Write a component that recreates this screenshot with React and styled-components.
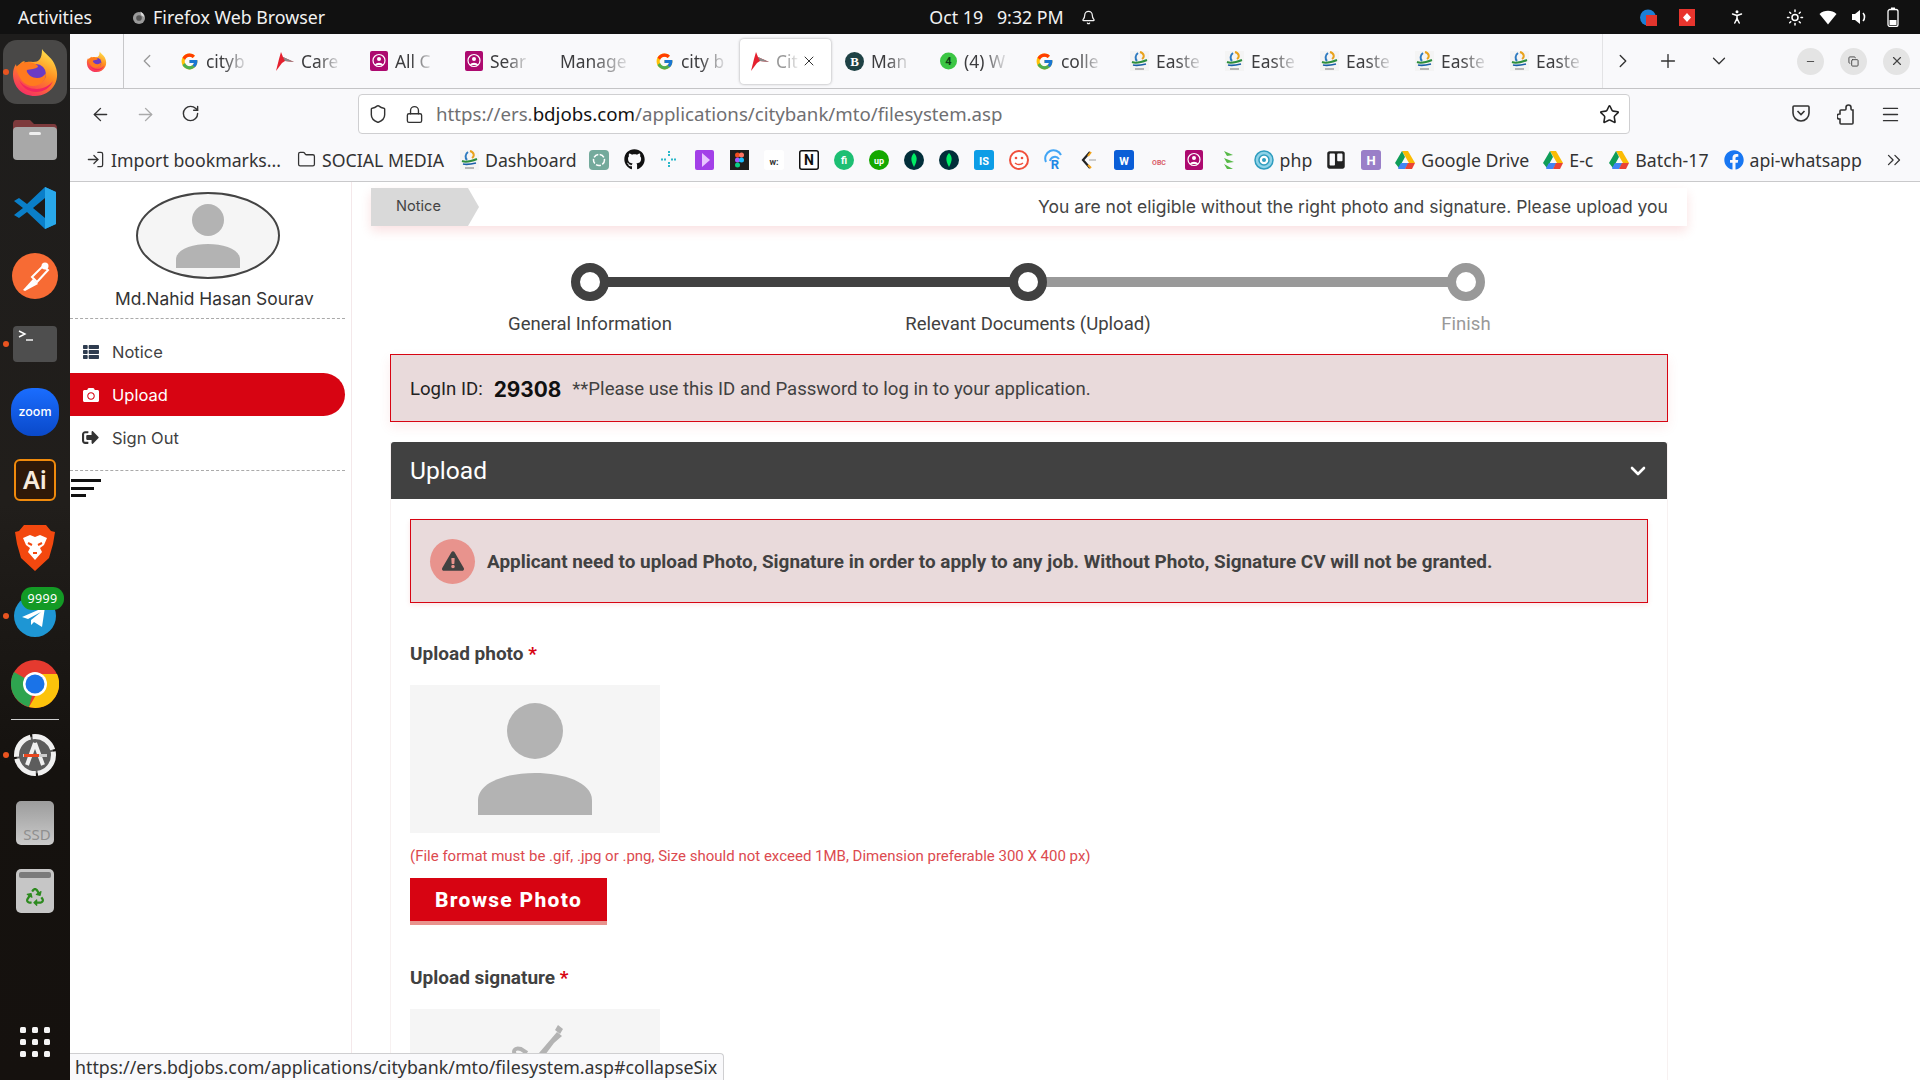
import React from "react";
import styled, { createGlobalStyle } from "styled-components";
import { FcGoogle } from "react-icons/fc";
import { FaGithub, FaTrello, FaFacebook, FaThList, FaCamera, FaSignOutAlt, FaExclamationTriangle, FaRecycle } from "react-icons/fa";
import {
  ArrowLeft, ArrowRight, RotateCw, Shield, Lock, Star, Menu, ChevronLeft, ChevronRight, ChevronDown,
  Plus, X, Minus, Copy, Folder, LogIn, Bell, PersonStanding, Sun, ChevronsRight,
} from "lucide-react";

const ui = `"Noto Sans", "Open Sans", sans-serif`;
const body = `Roboto, "Liberation Sans", sans-serif`;
const dark = "#414141";
const red = "#d70412";

const Global = createGlobalStyle`
  html, body { margin: 0; padding: 0; background: #fff; overflow: hidden; }
  * { box-sizing: border-box; }
  #root { width: 1920px; height: 1080px; }
`;

const Screen = styled.div`
  width: 1920px; height: 1080px; display: flex; flex-direction: column; overflow: hidden; position: relative;
  font-family: ${body};
`;
const TopBar = styled.div`
  height: 34px; background: #111; color: #f2f2f2; display: grid; grid-template-columns: 1fr auto 1fr;
  align-items: center; padding: 0 18px; font-family: ${ui}; font-size: 17.8px; flex-shrink: 0;
`;
const TopLeft = styled.div`display: flex; align-items: center;`;
const AppName = styled.div`display: flex; align-items: center; gap: 7px; margin-left: 40px;`;
const Clock = styled.div`display: flex; align-items: center; gap: 17px; margin-left: 105px;`;
const TopRight = styled.div`display: flex; justify-content: flex-end; align-items: center;`;
const TrayIcon = styled.span`
  display: flex; width: 18px; justify-content: center; margin-left: ${(p) => p.$gap || 0}px; color: #fff;
`;

const Body = styled.div`flex: 1; display: flex; min-height: 0;`;
const Dock = styled.div`
  width: 70px; flex-shrink: 0; display: flex; flex-direction: column; align-items: center; padding-top: 4px;
  background: linear-gradient(180deg, #1e1d1c 0%, #211e1b 45%, #15120f 70%, #15110e 100%);
`;
const DockItem = styled.div`
  position: relative; width: 64px; height: 68px; display: flex; align-items: center; justify-content: center;
  flex-shrink: 0;
`;
const DockActive = styled(DockItem)`
  background: #494847; border-radius: 14px; height: 64px; margin: 2px 0;
`;
const RunDot = styled.i`
  position: absolute; left: 0; top: 50%; width: 6px; height: 6px; margin-top: -3px; border-radius: 50%; background: #e95420;
`;
const Badge = styled.span`
  position: absolute; right: 3px; top: 5px; height: 23px; width: 43px; border-radius: 11px; background: #139a25; color: #fff;
  font-family: ${ui}; font-size: 12.5px; display: flex; align-items: center; justify-content: center; letter-spacing: .4px;
`;
const DockSep = styled.div`width: 48px; height: 1px; background: #cfcfcf; margin: 1px 0; flex-shrink: 0;`;
const AppGrid = styled.div`
  margin-top: auto; margin-bottom: 23px; display: grid; grid-template-columns: repeat(3, 6px); gap: 6px;
`;
const GridDot = styled.i`width: 6px; height: 6px; background: #f5f5f5; border-radius: 1.5px;`;

const Browser = styled.div`flex: 1; min-width: 0; display: flex; flex-direction: column; background: #fff;`;
const TabBar = styled.div`
  height: 55px; background: #f9f9fb; border-bottom: 1px solid #c4c4c6; display: flex; align-items: center; flex-shrink: 0;
`;
const TabLogo = styled.div`
  width: 54px; height: 54px; display: flex; align-items: center; justify-content: center; border-right: 1px solid #c8c8ca; flex-shrink: 0;
`;
const ScrollBtn = styled.div`width: 46px; display: flex; justify-content: center; color: #999; flex-shrink: 0;`;
const Tabs = styled.div`display: flex; gap: 4px; width: 1433px; height: 54px; align-items: center; border-right: 1px solid #e3e3e5; flex-shrink: 0;`;
const Tab = styled.div`
  width: 91px; height: 45px; padding: 0 10px; display: flex; align-items: center; gap: 7px; flex-shrink: 0; position: relative;
  font-family: ${ui}; font-size: 17.4px; color: #3d3d3f; border-radius: 4px;
  ${(p) => p.$active && "background:#fff; box-shadow: 0 0 3px rgba(0,0,0,.35);"}
`;
const TabLabel = styled.span`
  white-space: nowrap;
  -webkit-mask-image: linear-gradient(90deg, #000 45%, rgba(0,0,0,.15) 100%);
  mask-image: linear-gradient(90deg, #000 45%, rgba(0,0,0,.15) 100%);
  ${(p) => p.$active && "color:#999;"}
`;
const TabClose = styled.span`position: absolute; right: 14px; top: 14px; display: flex; color: #333;`;
const TabTools = styled.div`display: flex; align-items: center; color: #333;`;
const ToolBtn = styled.div`width: ${(p) => p.$w}px; display: flex; justify-content: center;`;
const WinBtn = styled.div`
  width: 27px; height: 27px; border-radius: 50%; background: #e4e4e4; display: flex; align-items: center; justify-content: center;
  margin-left: ${(p) => p.$gap}px; color: #444;
`;

const NavBar = styled.div`
  height: 50px; background: #f9f9fb; display: flex; align-items: center; flex-shrink: 0;
`;
const NavBtn = styled.div`
  width: 45px; display: flex; justify-content: center; color: ${(p) => p.$c || "#333"}; flex-shrink: 0;
`;
const NavGroup = styled.div`display: flex; margin-left: 8px;`;
const UrlBox = styled.div`
  width: 1272px; height: 40px; margin-left: 145px; background: #fff; border: 1px solid #cfcfd1; border-radius: 4px; display: flex; align-items: center;
  font-family: ${ui}; font-size: 18.7px; color: #6f6f72; padding: 0 9px; flex-shrink: 0;
`;
const UrlIcons = styled.div`display: flex; gap: 17px; align-items: center; color: #333; margin-right: 12px;`;
const UrlText = styled.div`flex: 1; white-space: nowrap; padding-bottom: 2px;`;
const Host = styled.span`color: #111;`;
const NavRight = styled.div`display: flex; margin-left: 148px;`;

const BookBar = styled.div`
  height: 43px; background: #f9f9fb; border-bottom: 1px solid #c9c9cb; display: flex; align-items: center; padding-left: 16px; padding-bottom: 1px; flex-shrink: 0;
  font-family: ${ui}; font-size: 17.7px; color: #333;
`;
const Mark = styled.div`
  display: flex; align-items: center; gap: 6px; white-space: nowrap; margin-left: ${(p) => p.$ml || 0}px; margin-right: ${(p) => p.$mr ?? 16}px; flex-shrink: 0;
`;
const IconMark = styled.div`width: 35px; display: flex; justify-content: center; flex-shrink: 0;`;
const More = styled.div`margin-left: 21px; display: flex; color: #333;`;

const Page = styled.div`flex: 1; min-height: 0; display: flex; overflow: hidden; background: #fff;`;
const Sidebar = styled.div`
  width: 282px; flex-shrink: 0; border-right: 1px solid #f4e8ea; padding: 10px 6px 0 0; display: flex; flex-direction: column;
`;
const AvatarWrap = styled.div`
  width: 144px; height: 87px; margin-left: 66px; border: 2px solid #444; border-radius: 50%; background: #f5f5f5; overflow: hidden;
  display: flex; align-items: flex-end; justify-content: center; padding-bottom: 9px;
`;
const UserName = styled.div`
  font-family: Inter, sans-serif; font-size: 17.4px; color: #333; margin: 9px 0 9px 45px; white-space: nowrap;
`;
const Dotted = styled.div`border-top: 1px dashed #aaa; height: 0;`;
const NavList = styled.div`display: flex; flex-direction: column; padding: 11px 0 11px;`;
const NavItem = styled.div`
  height: 43px; display: flex; align-items: center; gap: 13px; padding-left: 12px; font-family: Inter, sans-serif; font-size: 16.5px;
  color: ${(p) => (p.$active ? "#fff" : dark)}; background: ${(p) => (p.$active ? red : "transparent")};
  border-radius: ${(p) => (p.$active ? "0 22px 22px 0" : "0")};
`;
const NavIcon = styled.span`display: flex; width: 17px; justify-content: center; color: ${(p) => p.$c};`;
const Burger = styled.div`display: flex; flex-direction: column; gap: 4.5px; padding: 8px 0 0 1px;`;
const BurgerLine = styled.i`height: 3px; width: ${(p) => p.$w}px; background: #111;`;

const Main = styled.div`width: 1316px; margin-left: 19px; padding-top: 6px; flex-shrink: 0;`;
const NoticeBar = styled.div`
  height: 38px; display: flex; align-items: stretch; background: #fff; box-shadow: 0 5px 12px rgba(215, 4, 18, .12);
`;
const NoticeTag = styled.div`
  width: 97px; background: #d9d9d9; position: relative; display: flex; align-items: center; padding: 0 0 2px 25px;
  font-family: Inter, sans-serif; font-size: 14.6px; color: #444; flex-shrink: 0;
  &::after {
    content: ""; position: absolute; left: 100%; top: 0; border-left: 11px solid #d9d9d9; border-top: 19px solid transparent; border-bottom: 19px solid transparent;
  }
`;
const Marquee = styled.div`
  flex: 1; white-space: nowrap; padding: 0 0 2px 570px; display: flex; align-items: center;
  font-family: Inter, sans-serif; font-size: 17.5px; color: #444;
`;

const Steps = styled.div`display: flex; padding: 37px 0 1px; width: 1240px;`;
const Step = styled.div`
  width: 438px; display: flex; flex-direction: column; align-items: center; flex-shrink: 0; position: relative;
`;
const StepDot = styled.div`
  width: 38px; height: 38px; border-radius: 50%; background: #fff; border: 9px solid ${(p) => p.$c}; position: relative; z-index: 1;
`;
const StepLine = styled.div`
  position: absolute; left: 50%; top: 14px; width: 438px; height: 10px; background: ${(p) => p.$c};
`;
const StepLabel = styled.div`
  margin-top: 12px; font-size: 18.55px; color: ${(p) => p.$c}; white-space: nowrap;
`;

const Content = styled.div`margin: 18px 19px 0 19px;`;
const LoginBox = styled.div`
  height: 68px; background: #e9dadb; border: 1px solid ${red}; display: flex; align-items: center; padding: 2px 0 0 19px; font-size: 18.6px; color: #222;
  box-shadow: 0 5px 12px rgba(215, 4, 18, .08); white-space: pre;
`;
const LoginNum = styled.b`font-family: Inter, sans-serif; font-size: 20.8px; color: #111; margin: 0 11px; font-weight: 700;`;
const LoginNote = styled.span`color: ${dark};`;
const Panel = styled.div`margin-top: 20px; border-left: 1px solid #f7f1f1; border-right: 1px solid #f7f1f1;`;
const PanelHead = styled.div`
  height: 57px; background: ${dark}; color: #fff; display: flex; align-items: center; justify-content: space-between;
  padding: 0 17px 0 19px; font-size: 24.6px; border-radius: 3px 3px 0 0;
`;
const PanelBody = styled.div`padding: 20px 19px 0;`;
const AlertBox = styled.div`
  height: 84px; background: #e9dadb; border: 1px solid ${red}; display: flex; align-items: center; padding-left: 19px; gap: 12px;
  font-size: 18.9px; font-weight: 700; color: ${dark}; box-shadow: 0 2px 5px rgba(215,4,18,.1); white-space: nowrap;
`;
const AlertIcon = styled.div`
  width: 45px; height: 45px; border-radius: 50%; background: #e8938d; display: flex; align-items: center; justify-content: center; color: ${dark};
`;
const FieldLabel = styled.div`
  font-size: 19px; font-weight: 700; color: ${dark}; margin-top: ${(p) => p.$mt}px; height: 21px; line-height: 21px;
`;
const Req = styled.span`color: ${red};`;
const PhotoBox = styled.div`
  width: 250px; height: 148px; background: #f5f5f5; margin-top: 21px; display: flex; align-items: flex-start; justify-content: center;
  padding-top: ${(p) => p.$pt}px;
`;
const HelpText = styled.div`font-size: 15px; color: #dc4a4f; margin-top: 15px; height: 17px; line-height: 17px; white-space: nowrap;`;
const BrowseBtn = styled.button`
  display: block; width: 197px; height: 47px; margin-top: 13px; border: 0; border-bottom: 4px solid #e8938d; background: ${red}; color: #fff;
  font-family: ${body}; font-weight: 800; font-size: 21px; letter-spacing: 1.3px; padding: 0;
`;

const StatusLink = styled.div`
  position: absolute; left: 70px; bottom: 0; width: 654px; height: 27px; background: #f9f9fb; border: 1px solid #cfcfd1; border-left: 0; border-bottom: 0;
  border-radius: 0 4px 0 0; font-family: ${ui}; font-size: 17.8px; color: #333; padding-left: 5px; display: flex; align-items: center; white-space: nowrap;
`;

const FirefoxLogo = ({ s = 24 }) => (
  <svg width={s} height={s} viewBox="0 0 48 48">
    <defs>
      <linearGradient id="ffa" x1="0.7" y1="0" x2="0.2" y2="1"><stop offset="0" stopColor="#ffe04a" /><stop offset=".45" stopColor="#ff8a1f" /><stop offset="1" stopColor="#f6256b" /></linearGradient>
    </defs>
    <path d="M31 1c2 4 9 8 12 14 4 8 4 15 1 21-4 8-12 12-20 12C11 48 2 39 2 26c0-4 1-7 3-10 0 2 1 3 2 4 1-4 4-7 7-7-1 1-1 2-1 3 3-3 6-2 9-2 6 0 9-3 9-13z" fill="url(#ffa)" />
    <circle cx="25" cy="26" r="10" fill="#6a3bc4" />
    <path d="M5 19c5-5 11-6 17-4 3 1 5 2 5 4-3 2-7 2-12 3 2 5 6 8 11 8 4 0 7-2 9-5 0 8-6 13-13 13C13 38 7 30 5 19z" fill="#ff7a1f" />
    <path d="M8 32c3 7 9 12 17 12s14-4 17-11c-3 4-9 8-16 8s-14-3-18-9z" fill="#f2255f" />
  </svg>
);

const FolderApp = () => (
  <svg width="46" height="42" viewBox="0 0 46 42">
    <path d="M1 5c0-2 1-4 3-4h14l4 4h20c2 0 3 2 3 4v12H1z" fill="#7d3a3c" />
    <rect x="1" y="8" width="44" height="33" rx="4" fill="#a8a8a8" />
    <rect x="17" y="13" width="12" height="3" rx="1.5" fill="#efefef" />
  </svg>
);
const VsCode = () => (
  <svg width="44" height="44" viewBox="0 0 44 44">
    <path d="M32 1l11 5v32l-11 5-18-17-8 6-5-3 9-7-9-7 5-3 8 6z" fill="#0a7fc9" />
    <path d="M32 1l11 5v32l-11 5z" fill="#29a8ea" />
    <path d="M32 12L20 22l12 10z" fill="#1c1b1a" />
  </svg>
);
const Postman = () => (
  <svg width="46" height="46" viewBox="0 0 46 46">
    <circle cx="23" cy="23" r="23" fill="#f76b34" />
    <path d="M11 37l10-11 5 5-13 7z" fill="#fff" />
    <path d="M20 24l11-11 5 4-11 12z" fill="none" stroke="#fff" strokeWidth="2" />
    <circle cx="33" cy="13" r="3.5" fill="#fff" />
  </svg>
);
const TerminalApp = () => (
  <svg width="44" height="36" viewBox="0 0 44 36">
    <rect width="44" height="36" rx="4" fill="#4e4e4e" />
    <path d="M6 5l6 3-6 3" fill="none" stroke="#fff" strokeWidth="1.4" />
    <path d="M13 14h7" stroke="#fff" strokeWidth="1.4" />
  </svg>
);
const ZoomApp = () => (
  <svg width="48" height="48" viewBox="0 0 48 48">
    <defs><linearGradient id="zm" x1="0" y1="0" x2="0" y2="1"><stop offset="0" stopColor="#1a6dff" /><stop offset="1" stopColor="#0a49c9" /></linearGradient></defs>
    <rect width="48" height="48" rx="21" fill="url(#zm)" />
    <text x="24" y="28" textAnchor="middle" fontFamily="Inter, sans-serif" fontSize="12.5" fontWeight="500" fill="#fff">zoom</text>
  </svg>
);
const AiApp = () => (
  <svg width="42" height="42" viewBox="0 0 42 42">
    <rect x="1" y="1" width="40" height="40" rx="5" fill="#2e1808" stroke="#f08a0c" strokeWidth="2" />
    <text x="21" y="30" textAnchor="middle" fontFamily="Noto Sans, sans-serif" fontSize="25" fontWeight="600" fill="#f7ebdc">Ai</text>
  </svg>
);
const Brave = () => (
  <svg width="42" height="48" viewBox="0 0 42 48">
    <path d="M10 1h22l5 6 4 1-2 12-4 14-14 13-14-13-4-14L1 8l4-1z" fill="#f3480f" />
    <path d="M9 14l7-3 5 2 5-2 7 3-3 7-4 3 2 4-7 8-7-8 2-4-4-3z" fill="#fff" />
    <path d="M14 19l4 2M28 19l-4 2M19 29h4" stroke="#f3480f" strokeWidth="2" />
  </svg>
);
const Telegram = () => (
  <svg width="42" height="42" viewBox="0 0 42 42">
    <circle cx="21" cy="21" r="21" fill="#1e96d4" />
    <path d="M8 22l23-10-3 20-8-5-3 3v-5l10-8-13 7z" fill="#fff" />
  </svg>
);
const Chrome = () => (
  <svg width="48" height="48" viewBox="0 0 48 48">
    <circle cx="24" cy="24" r="24" fill="#e53a2f" />
    <path d="M24 24L3 12A24 24 0 0 0 18 47z" fill="#2ea44f" />
    <path d="M24 14h22a24 24 0 0 1-22 34l-6-1 11-19z" fill="#fcc30b" />
    <circle cx="24" cy="24" r="12" fill="#fff" />
    <circle cx="24" cy="24" r="9.5" fill="#1a73e8" />
  </svg>
);
const Updater = () => (
  <svg width="42" height="42" viewBox="0 0 42 42">
    <circle cx="21" cy="21" r="18.500" fill="#5d5d5d" stroke="#f0f0f0" strokeWidth="5" strokeDasharray="26 2" />
    <path d="M21 9L13 31M21 9l8 22" stroke="#f0f0f0" strokeWidth="4" fill="none" />
    <rect x="9" y="20" width="24" height="3" fill="#ccc" />
    <rect x="10" y="20" width="15" height="3" fill="#e8461e" />
  </svg>
);
const SsdDrive = () => (
  <svg width="38" height="44" viewBox="0 0 38 44">
    <defs><linearGradient id="ssd" x1="0" y1="0" x2="0" y2="1"><stop offset="0" stopColor="#9c9c9c" /><stop offset="1" stopColor="#cbcbcb" /></linearGradient></defs>
    <rect width="38" height="44" rx="5" fill="url(#ssd)" />
    <text x="21" y="39" textAnchor="middle" fontFamily="Noto Sans, sans-serif" fontSize="15" fill="#8f8f8f">SSD</text>
  </svg>
);
const TrashBox = styled.div`
  width: 38px; height: 44px; border-radius: 5px; background: #c6c6c6; position: relative; display: flex; align-items: flex-end; justify-content: center;
  padding-bottom: 7px; color: #2d8a1f;
  &::before { content: ""; position: absolute; left: 3px; right: 3px; top: 3px; height: 6px; border-radius: 2px; background: #7b7b7b; }
`;

const BdBird = () => (
  <svg width="19" height="20" viewBox="0 0 19 20">
    <path d="M1 20L4 8 6 1l2 5 11 5-9-1-3 2z" fill="#e5202e" />
    <path d="M8 6l11 5-9-1z" fill="#8a8a8a" />
  </svg>
);
const RoundSquare = ({ c }) => (
  <svg width="18" height="20" viewBox="0 0 18 20">
    <rect width="18" height="20" rx="2" fill={c} />
    <circle cx="9" cy="9.5" r="6" fill="none" stroke="#fff" strokeWidth="1.2" />
    <circle cx="9" cy="8" r="2" fill="#fff" />
    <path d="M5 14c1-3 7-3 8 0z" fill="#fff" />
  </svg>
);
const BCircle = () => (
  <svg width="19" height="19" viewBox="0 0 19 19">
    <circle cx="9.5" cy="9.5" r="9.5" fill="#1f4245" />
    <text x="9.5" y="14" textAnchor="middle" fontSize="13" fontWeight="700" fontFamily="Liberation Serif, serif" fill="#fff">B</text>
  </svg>
);
const GreenFour = () => (
  <svg width="17" height="18" viewBox="0 0 17 18">
    <circle cx="8.5" cy="9" r="8.5" fill="#3cc644" />
    <text x="8.5" y="13" textAnchor="middle" fontSize="11" fontWeight="700" fontFamily="Roboto, sans-serif" fill="#0c3d12">4</text>
  </svg>
);
const EastLogo = () => (
  <svg width="19" height="20" viewBox="0 0 19 20">
    <rect width="19" height="20" fill="#f4f4f4" />
    <path d="M10 1c4 1 5 5 2 7" fill="none" stroke="#e9a21b" strokeWidth="2" />
    <path d="M8 2C5 4 5 8 7 10" fill="none" stroke="#2f7bc0" strokeWidth="2" />
    <path d="M2 11c5 2 10 0 15-2" fill="none" stroke="#2d8e3d" strokeWidth="2" />
    <path d="M3 14c4 1 9 0 13-1" fill="none" stroke="#1a5fa8" strokeWidth="1.6" />
    <path d="M5 18h9" stroke="#9a9a9a" strokeWidth="1.4" />
  </svg>
);
const Drive = () => (
  <svg width="20" height="18" viewBox="0 0 20 18">
    <path d="M7 0h6l7 12h-6z" fill="#fbbc04" />
    <path d="M7 0l3 6-6 11-4-5z" fill="#0f9d58" />
    <path d="M6 12h8l-4 6H3.500L3 17z" fill="#4285f4" />
    <path d="M13 12h7l-3 6h-7z" fill="#ea4335" />
  </svg>
);
const Square = ({ c, children, color = "#fff", fs = 12, line }) => (
  <svg width="20" height="20" viewBox="0 0 20 20">
    <rect x=".75" y=".75" width="18.5" height="18.5" rx="2" fill={c} stroke={line || c} strokeWidth="1.5" />
    <text x="10" y="14.5" textAnchor="middle" fontFamily="Roboto, sans-serif" fontWeight="700" fontSize={fs} fill={color}>{children}</text>
  </svg>
);
const FigmaTile = () => (
  <svg width="19" height="20" viewBox="0 0 19 20">
    <rect width="19" height="20" fill="#1e1e1e" />
    <circle cx="7.500" cy="5" r="2.500" fill="#f24e1e" /><circle cx="11.500" cy="5" r="2.500" fill="#ff7262" />
    <circle cx="7.500" cy="10" r="2.500" fill="#a259ff" /><circle cx="11.500" cy="10" r="2.500" fill="#1abcfe" />
    <circle cx="7.500" cy="15" r="2.500" fill="#0acf83" />
  </svg>
);
const Disc = ({ c, children, color = "#fff", fs = 10 }) => (
  <svg width="20" height="20" viewBox="0 0 20 20">
    <circle cx="10" cy="10" r="10" fill={c} />
    <text x="10" y="13.500" textAnchor="middle" fontFamily="Roboto, sans-serif" fontWeight="700" fontSize={fs} fill={color}>{children}</text>
  </svg>
);
const Leaf = ({ c = "#00ed64" }) => (
  <svg width="20" height="20" viewBox="0 0 20 20">
    <circle cx="10" cy="10" r="10" fill="#022f3a" />
    <path d="M10 3c3 3 4 7 0 14-4-7-3-11 0-14z" fill={c} />
  </svg>
);
const Sparks = () => (
  <svg width="20" height="19" viewBox="0 0 20 19">
    <path d="M10 1v6M10 12v6M2 9.5h6M12 9.5h6" stroke="#2bb8c9" strokeWidth="2" strokeDasharray="2 1" />
  </svg>
);
const Play = () => (
  <svg width="19" height="20" viewBox="0 0 19 20">
    <rect width="19" height="20" rx="2" fill="#a340e8" />
    <path d="M7 3l8 7-8 7z" fill="#e9c6ff" />
  </svg>
);
const FaceIcon = () => (
  <svg width="20" height="20" viewBox="0 0 20 20">
    <circle cx="10" cy="10" r="9" fill="#fff" stroke="#f0503c" strokeWidth="2" />
    <circle cx="7" cy="8" r="1.3" fill="#f0503c" /><circle cx="13" cy="8" r="1.3" fill="#f0503c" />
    <path d="M6 13c2 2 6 2 8 0" stroke="#f0503c" fill="none" strokeWidth="1.4" />
  </svg>
);
const RIcon = () => (
  <svg width="20" height="21" viewBox="0 0 20 21">
    <path d="M2 13a8 8 0 0 1 15-7" stroke="#42a5f5" strokeWidth="2" fill="none" />
    <path d="M6 12a5 5 0 0 1 9-2" stroke="#42a5f5" strokeWidth="2" fill="none" />
    <text x="11" y="20" textAnchor="middle" fontFamily="Roboto, sans-serif" fontWeight="700" fontSize="13" fill="#1e88e5">R</text>
  </svg>
);
const Cee = () => (
  <svg width="18" height="20" viewBox="0 0 18 20">
    <path d="M10 2L3 10l7 8" stroke="#222" strokeWidth="2.2" fill="none" />
    <path d="M9 10h7" stroke="#ccc" strokeWidth="2" /><path d="M11 2L8 6" stroke="#f4a51c" strokeWidth="2" /><path d="M8 15l3 3" stroke="#f4a51c" strokeWidth="2" />
  </svg>
);
const Arrows = () => (
  <svg width="16" height="20" viewBox="0 0 16 20">
    <path d="M3 1l9 4-6 1zM3 8l10 4-7 1zM3 14l9 5-6 0z" fill="#57b947" />
  </svg>
);
const Ring = () => (
  <svg width="20" height="20" viewBox="0 0 20 20">
    <circle cx="10" cy="10" r="9" fill="#8fd3e8" stroke="#2f9dbf" strokeWidth="1.5" />
    <circle cx="10" cy="10" r="5" fill="#fff" stroke="#2f9dbf" strokeWidth="1.5" />
    <circle cx="10" cy="10" r="2" fill="#2f9dbf" />
  </svg>
);
const GptIcon = () => (
  <svg width="20" height="20" viewBox="0 0 20 20">
    <rect width="20" height="20" rx="4" fill="#74aa9c" />
    <circle cx="10" cy="10" r="5.5" fill="none" stroke="#fff" strokeWidth="1.5" strokeDasharray="5 1.5" />
  </svg>
);
const Pocket = () => (
  <svg width="18" height="18" viewBox="0 0 18 18">
    <path d="M2 2h14c.6 0 1 .4 1 1v6a8 8 0 0 1-16 0V3c0-.6.4-1 1-1z" fill="none" stroke="#333" strokeWidth="1.6" />
    <path d="M5.5 7L9 10.5 12.5 7" fill="none" stroke="#333" strokeWidth="1.6" />
  </svg>
);
const ExtensionIcon = () => (
  <svg width="18" height="21" viewBox="0 0 18 21">
    <path d="M9 5V3.500a2.500 2.500 0 0 1 5 0V5c0 .5.300 1 1 1h1v13a1 1 0 0 1-1 1H4a1 1 0 0 1-1-1v-4H2.500a2.500 2.500 0 0 1 0-5H3V7a1 1 0 0 1 1-1h4c.6 0 1-.5 1-1z" fill="none" stroke="#333" strokeWidth="1.600" />
  </svg>
);
const Person = ({ w, h, r, bw, bh }) => (
  <svg width={w} height={h} viewBox={`0 0 ${w} ${h}`}>
    <circle cx={w / 2} cy={r} r={r} fill="#b3b3b3" />
    <path d={`M${(w - bw) / 2} ${h}v-${bh * 0.35}c0-${bh * 0.87} ${bw}-${bh * 0.87} ${bw} 0v${bh * 0.35}z`} fill="#b3b3b3" />
  </svg>
);
const Pen = () => (
  <svg width="60" height="36" viewBox="0 0 60 36">
    <path d="M34 30L52 9l5 4-8 7-9 12z" fill="#b3b3b3" />
    <path d="M53 2l5 4-3 5-5-4z" fill="#b3b3b3" />
    <path d="M12 34c-6-6-2-10 4-8l6 4" fill="none" stroke="#b3b3b3" strokeWidth="4" />
  </svg>
);
const FirefoxGray = () => (
  <svg width="14" height="15" viewBox="0 0 15 15">
    <circle cx="7.500" cy="8" r="6.500" fill="#9a9a9a" />
    <circle cx="7.500" cy="8" r="3" fill="#555" />
    <path d="M9 1c2 1 4 3 4 6l-3-2z" fill="#ddd" />
  </svg>
);
const TrayDisc = () => (
  <svg width="17" height="17" viewBox="0 0 17 17">
    <circle cx="8" cy="8.500" r="8" fill="#1c7fd6" />
    <rect x="6" y="6" width="11" height="11" fill="#e2352d" />
  </svg>
);
const TrayRed = () => (
  <svg width="16" height="17" viewBox="0 0 16 17">
    <rect width="16" height="17" fill="#e8352e" />
    <path d="M8 4l4 4.500-4 4.500-4-4.500z" fill="#fff" />
  </svg>
);
const WifiFan = () => (
  <svg width="18" height="16" viewBox="0 0 18 16">
    <path d="M9 15.500L.5 5C5 .8 13 .8 17.500 5z" fill="#fff" />
  </svg>
);
const SpeakerIcon = () => (
  <svg width="18" height="16" viewBox="0 0 18 16">
    <path d="M1 5h3l5-4v14l-5-4H1z" fill="#fff" />
    <path d="M12 4c2 2 2 6 0 8" fill="none" stroke="#fff" strokeWidth="1.600" />
  </svg>
);
const BatteryIcon = () => (
  <svg width="12" height="20" viewBox="0 0 12 20">
    <rect x="1" y="2.500" width="10" height="17" rx="2" fill="none" stroke="#fff" strokeWidth="1.300" />
    <rect x="4" y=".5" width="4" height="2" fill="#fff" />
    <rect x="2.500" y="13" width="7" height="5" fill="#fff" />
  </svg>
);

const tabs = [
  { icon: <FcGoogle size={19} />, label: "cityb" },
  { icon: <BdBird />, label: "Care" },
  { icon: <RoundSquare c="#ad0a6f" />, label: "All C" },
  { icon: <RoundSquare c="#ad0a6f" />, label: "Sear" },
  { label: "Manage" },
  { icon: <FcGoogle size={19} />, label: "city b" },
  { icon: <BdBird />, label: "Cit", active: true },
  { icon: <BCircle />, label: "Man" },
  { icon: <GreenFour />, label: "(4) W" },
  { icon: <FcGoogle size={19} />, label: "colle" },
  { icon: <EastLogo />, label: "Easte" },
  { icon: <EastLogo />, label: "Easte" },
  { icon: <EastLogo />, label: "Easte" },
  { icon: <EastLogo />, label: "Easte" },
  { icon: <EastLogo />, label: "Easte" },
];

const iconMarks = [
  <GptIcon />, <FaGithub size={21} color="#111" />, <Sparks />, <Play />, <FigmaTile />,
  <Square c="#fff" color="#333" fs={9}>w:</Square>, <Square c="#fff" color="#111" fs={14} line="#111">N</Square>, <Disc c="#1dbf73">fi</Disc>,
  <Disc c="#14a800" fs={9}>up</Disc>, <Leaf />, <Leaf />, <Square c="#0d9de6" fs={11}>IS</Square>, <FaceIcon />, <RIcon />, <Cee />,
  <Square c="#0b5ed7" fs={11}>W</Square>, <Square c="#f9f9fb" color="#d9616a" fs={7}>OBC</Square>, <RoundSquare c="#ad0a6f" />, <Arrows />,
];

const dockDots = [0, 1, 2, 3, 4, 5, 6, 7, 8];

export default function App() {
  return (
    <Screen>
      <Global />
      <TopBar>
        <TopLeft>
          Activities
          <AppName><FirefoxGray />Firefox Web Browser</AppName>
        </TopLeft>
        <Clock>
          <span>Oct 19&nbsp;&nbsp;&nbsp;9:32 PM</span>
          <Bell size={15} />
        </Clock>
        <TopRight>
          <TrayIcon><TrayDisc /></TrayIcon>
          <TrayIcon $gap={21}><TrayRed /></TrayIcon>
          <TrayIcon $gap={32}><PersonStanding size={20} /></TrayIcon>
          <TrayIcon $gap={40}><Sun size={19} /></TrayIcon>
          <TrayIcon $gap={15}><WifiFan /></TrayIcon>
          <TrayIcon $gap={14}><SpeakerIcon /></TrayIcon>
          <TrayIcon $gap={15}><BatteryIcon /></TrayIcon>
        </TopRight>
      </TopBar>
      <Body>
        <Dock>
          <DockActive><RunDot /><FirefoxLogo s={48} /></DockActive>
          <DockItem><FolderApp /></DockItem>
          <DockItem><VsCode /></DockItem>
          <DockItem><Postman /></DockItem>
          <DockItem><RunDot /><TerminalApp /></DockItem>
          <DockItem><ZoomApp /></DockItem>
          <DockItem><AiApp /></DockItem>
          <DockItem><Brave /></DockItem>
          <DockItem><RunDot /><Telegram /><Badge>9999</Badge></DockItem>
          <DockItem><Chrome /></DockItem>
          <DockSep />
          <DockItem><RunDot /><Updater /></DockItem>
          <DockItem><SsdDrive /></DockItem>
          <DockItem><TrashBox><FaRecycle size={18} /></TrashBox></DockItem>
          <AppGrid>{dockDots.map((d) => <GridDot key={d} />)}</AppGrid>
        </Dock>
        <Browser>
          <TabBar>
            <TabLogo><FirefoxLogo s={21} /></TabLogo>
            <ScrollBtn><ChevronLeft size={22} strokeWidth={1.4} /></ScrollBtn>
            <Tabs>
              {tabs.map((t, i) => (
                <Tab key={i} $active={t.active}>
                  {t.icon}
                  <TabLabel $active={t.active}>{t.label}</TabLabel>
                  {t.active && <TabClose><X size={16} strokeWidth={1.5} /></TabClose>}
                </Tab>
              ))}
            </Tabs>
            <TabTools>
              <ToolBtn $w={40}><ChevronRight size={22} strokeWidth={1.5} /></ToolBtn>
              <ToolBtn $w={50}><Plus size={22} strokeWidth={1.5} /></ToolBtn>
              <ToolBtn $w={52}><ChevronDown size={22} strokeWidth={1.4} /></ToolBtn>
            </TabTools>
            <WinBtn $gap={52}><Minus size={11} strokeWidth={2} /></WinBtn>
            <WinBtn $gap={16}><Copy size={11} strokeWidth={2} /></WinBtn>
            <WinBtn $gap={16}><X size={14} strokeWidth={2} /></WinBtn>
          </TabBar>
          <NavBar>
            <NavGroup>
              <NavBtn><ArrowLeft size={21} strokeWidth={1.6} /></NavBtn>
              <NavBtn $c="#aaa"><ArrowRight size={21} strokeWidth={1.6} /></NavBtn>
              <NavBtn><RotateCw size={19} strokeWidth={1.8} /></NavBtn>
            </NavGroup>
            <UrlBox>
              <UrlIcons><Shield size={20} strokeWidth={1.7} /><Lock size={19} strokeWidth={1.7} /></UrlIcons>
              <UrlText>https://ers.<Host>bdjobs.com</Host>/applications/citybank/mto/filesystem.asp</UrlText>
              <Star size={21} strokeWidth={1.8} color="#222" />
            </UrlBox>
            <NavRight>
              <NavBtn><Pocket /></NavBtn>
              <NavBtn><ExtensionIcon /></NavBtn>
              <NavBtn><Menu size={21} strokeWidth={1.6} /></NavBtn>
            </NavRight>
          </NavBar>
          <BookBar>
            <Mark><LogIn size={19} strokeWidth={1.6} />Import bookmarks...</Mark>
            <Mark><Folder size={19} strokeWidth={1.6} />SOCIAL MEDIA</Mark>
            <Mark $mr={5}><EastLogo />Dashboard</Mark>
            {iconMarks.map((m, i) => <IconMark key={i}>{m}</IconMark>)}
            <Mark $ml={7} $mr={6}><Ring />php</Mark>
            <IconMark><FaTrello size={20} color="#222" /></IconMark>
            <IconMark><Square c="#9a7fc8" fs={13}>H</Square></IconMark>
            <Mark $ml={7} $mr={14}><Drive />Google Drive</Mark>
            <Mark $mr={16}><Drive />E-c</Mark>
            <Mark $mr={15}><Drive />Batch-17</Mark>
            <Mark $mr={0}><FaFacebook size={20} color="#1877f2" />api-whatsapp</Mark>
            <More><ChevronsRight size={22} strokeWidth={1.4} /></More>
          </BookBar>
          <Page>
            <Sidebar>
              <AvatarWrap><Person w={64} h={64} r={16} bw={64} bh={24} /></AvatarWrap>
              <UserName>Md.Nahid Hasan Sourav</UserName>
              <Dotted />
              <NavList>
                <NavItem><NavIcon $c="#2e3c4f"><FaThList size={16} /></NavIcon>Notice</NavItem>
                <NavItem $active><NavIcon $c="#fff"><FaCamera size={16} /></NavIcon>Upload</NavItem>
                <NavItem><NavIcon $c="#333"><FaSignOutAlt size={17} /></NavIcon>Sign Out</NavItem>
              </NavList>
              <Dotted />
              <Burger><BurgerLine $w={30} /><BurgerLine $w={23} /><BurgerLine $w={15} /></Burger>
            </Sidebar>
            <Main>
              <NoticeBar>
                <NoticeTag>Notice</NoticeTag>
                <Marquee>You are not eligible without the right photo and signature. Please upload you</Marquee>
              </NoticeBar>
              <Steps>
                <Step>
                  <StepLine $c={dark} />
                  <StepDot $c={dark} />
                  <StepLabel $c={dark}>General Information</StepLabel>
                </Step>
                <Step>
                  <StepLine $c="#999" />
                  <StepDot $c={dark} />
                  <StepLabel $c={dark}>Relevant Documents (Upload)</StepLabel>
                </Step>
                <Step>
                  <StepDot $c="#999" />
                  <StepLabel $c="#999">Finish</StepLabel>
                </Step>
              </Steps>
              <Content>
                <LoginBox>LogIn ID:<LoginNum>29308</LoginNum><LoginNote>**Please use this ID and Password to log in to your application.</LoginNote></LoginBox>
                <Panel>
                  <PanelHead>Upload<ChevronDown size={24} strokeWidth={2.6} /></PanelHead>
                  <PanelBody>
                    <AlertBox>
                      <AlertIcon><FaExclamationTriangle size={22} /></AlertIcon>
                      Applicant need to upload Photo, Signature in order to apply to any job. Without Photo, Signature CV will not be granted.
                    </AlertBox>
                    <FieldLabel $mt={40}>Upload photo <Req>*</Req></FieldLabel>
                    <PhotoBox $pt={18}><Person w={114} h={112} r={28} bw={114} bh={42} /></PhotoBox>
                    <HelpText>(File format must be .gif, .jpg or .png, Size should not exceed 1MB, Dimension preferable 300 X 400 px)</HelpText>
                    <BrowseBtn>Browse Photo</BrowseBtn>
                    <FieldLabel $mt={42}>Upload signature <Req>*</Req></FieldLabel>
                    <PhotoBox $pt={14}><Pen /></PhotoBox>
                  </PanelBody>
                </Panel>
              </Content>
            </Main>
          </Page>
        </Browser>
      </Body>
      <StatusLink>https://ers.bdjobs.com/applications/citybank/mto/filesystem.asp#collapseSix</StatusLink>
    </Screen>
  );
}
